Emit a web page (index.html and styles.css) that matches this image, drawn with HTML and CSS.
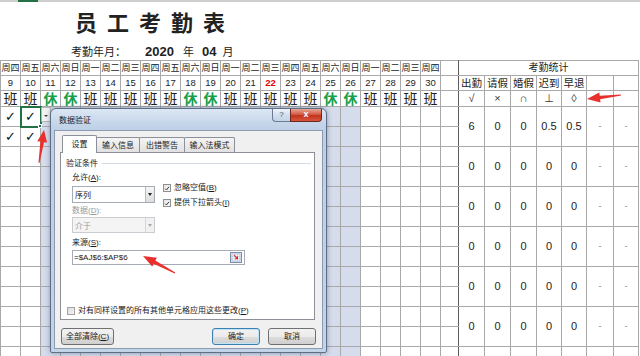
FILE: index.html
```html
<!DOCTYPE html>
<html lang="zh-CN">
<head>
<meta charset="utf-8">
<title>员工考勤表</title>
<link rel="stylesheet" href="styles.css">
</head>
<body>
<div class="colhdr"><div class="colhdr-sel"></div></div>
<h1 class="title">员工考勤表</h1>
<div class="period"><span class="pl">考勤年月：</span><b class="yr">2020</b><span class="yu">年</span><b class="mo">04</b><span class="yu2">月</span></div>
<table class="sheet">
<colgroup>
<col class="d"><col class="d">
<col class="d sel"><col class="d sel"><col class="d sel"><col class="d sel"><col class="d sel"><col class="d sel"><col class="d sel"><col class="d sel">
<col class="d sel"><col class="d sel"><col class="d sel"><col class="d sel"><col class="d sel"><col class="d sel"><col class="d sel"><col class="d sel">
<col class="d"><col class="d"><col class="d"><col class="d">
<col class="x">
<col class="s26"><col class="s26"><col class="s26"><col class="s25"><col class="s25"><col class="s27"><col class="s25">
</colgroup>
<tbody>
<tr class="hd r-wk"><td>周四</td><td>周五</td><td>周六</td><td>周日</td><td>周一</td><td>周二</td><td>周三</td><td>周四</td><td>周五</td><td>周六</td><td>周日</td><td>周一</td><td>周二</td><td>周三</td><td>周四</td><td>周五</td><td>周六</td><td>周日</td><td>周一</td><td>周二</td><td>周三</td><td>周四</td><td class="sep"></td><td class="st1 stat-h" colspan="7">考勤统计</td></tr>
<tr class="hd r-no"><td>9</td><td>10</td><td>11</td><td>12</td><td>13</td><td>14</td><td>15</td><td>16</td><td>17</td><td>18</td><td>19</td><td>20</td><td>21</td><td class="red">22</td><td>23</td><td>24</td><td>25</td><td>26</td><td>27</td><td>28</td><td>29</td><td>30</td><td class="sep"></td><td class="st1 kh">出勤</td><td class="kh">请假</td><td class="kh">婚假</td><td class="kh">迟到</td><td class="kh">早退</td><td></td><td></td></tr>
<tr class="hd r-sh"><td>班</td><td>班</td><td class="xiu">休</td><td class="xiu">休</td><td>班</td><td>班</td><td>班</td><td>班</td><td>班</td><td class="xiu">休</td><td class="xiu">休</td><td>班</td><td>班</td><td>班</td><td>班</td><td>班</td><td class="xiu">休</td><td class="xiu">休</td><td>班</td><td>班</td><td>班</td><td>班</td><td class="sep"></td><td class="st1 sym">√</td><td class="sym">×</td><td class="sym">∩</td><td class="sym">⊥</td><td class="sym">◊</td><td></td><td></td></tr>
<tr class="dr"><td class="ck">✓</td><td class="ck act">✓</td><td></td><td></td><td></td><td></td><td></td><td></td><td></td><td></td><td></td><td></td><td></td><td></td><td></td><td></td><td></td><td></td><td></td><td></td><td></td><td></td><td class="sep"></td><td class="st1 sv" rowspan="2">6</td><td class="sv" rowspan="2">0</td><td class="sv" rowspan="2">0</td><td class="sv" rowspan="2">0.5</td><td class="sv" rowspan="2">0.5</td><td class="dash" rowspan="2">-</td><td class="dash" rowspan="2">-</td></tr>
<tr class="dr"><td class="ck">✓</td><td class="ck">✓</td><td></td><td></td><td></td><td></td><td></td><td></td><td></td><td></td><td></td><td></td><td></td><td></td><td></td><td></td><td></td><td></td><td></td><td></td><td></td><td></td><td class="sep"></td></tr>
<tr class="dr"><td></td><td></td><td></td><td></td><td></td><td></td><td></td><td></td><td></td><td></td><td></td><td></td><td></td><td></td><td></td><td></td><td></td><td></td><td></td><td></td><td></td><td></td><td class="sep"></td><td class="st1 sv" rowspan="2">0</td><td class="sv" rowspan="2">0</td><td class="sv" rowspan="2">0</td><td class="sv" rowspan="2">0</td><td class="sv" rowspan="2">0</td><td class="dash" rowspan="2">-</td><td class="dash" rowspan="2">-</td></tr>
<tr class="dr"><td></td><td></td><td></td><td></td><td></td><td></td><td></td><td></td><td></td><td></td><td></td><td></td><td></td><td></td><td></td><td></td><td></td><td></td><td></td><td></td><td></td><td></td><td class="sep"></td></tr>
<tr class="dr"><td></td><td></td><td></td><td></td><td></td><td></td><td></td><td></td><td></td><td></td><td></td><td></td><td></td><td></td><td></td><td></td><td></td><td></td><td></td><td></td><td></td><td></td><td class="sep"></td><td class="st1 sv" rowspan="2">0</td><td class="sv" rowspan="2">0</td><td class="sv" rowspan="2">0</td><td class="sv" rowspan="2">0</td><td class="sv" rowspan="2">0</td><td class="dash" rowspan="2">-</td><td class="dash" rowspan="2">-</td></tr>
<tr class="dr"><td></td><td></td><td></td><td></td><td></td><td></td><td></td><td></td><td></td><td></td><td></td><td></td><td></td><td></td><td></td><td></td><td></td><td></td><td></td><td></td><td></td><td></td><td class="sep"></td></tr>
<tr class="dr"><td></td><td></td><td></td><td></td><td></td><td></td><td></td><td></td><td></td><td></td><td></td><td></td><td></td><td></td><td></td><td></td><td></td><td></td><td></td><td></td><td></td><td></td><td class="sep"></td><td class="st1 sv" rowspan="2">0</td><td class="sv" rowspan="2">0</td><td class="sv" rowspan="2">0</td><td class="sv" rowspan="2">0</td><td class="sv" rowspan="2">0</td><td class="dash" rowspan="2">-</td><td class="dash" rowspan="2">-</td></tr>
<tr class="dr"><td></td><td></td><td></td><td></td><td></td><td></td><td></td><td></td><td></td><td></td><td></td><td></td><td></td><td></td><td></td><td></td><td></td><td></td><td></td><td></td><td></td><td></td><td class="sep"></td></tr>
<tr class="dr"><td></td><td></td><td></td><td></td><td></td><td></td><td></td><td></td><td></td><td></td><td></td><td></td><td></td><td></td><td></td><td></td><td></td><td></td><td></td><td></td><td></td><td></td><td class="sep"></td><td class="st1 sv" rowspan="2">0</td><td class="sv" rowspan="2">0</td><td class="sv" rowspan="2">0</td><td class="sv" rowspan="2">0</td><td class="sv" rowspan="2">0</td><td class="dash" rowspan="2">-</td><td class="dash" rowspan="2">-</td></tr>
<tr class="dr"><td></td><td></td><td></td><td></td><td></td><td></td><td></td><td></td><td></td><td></td><td></td><td></td><td></td><td></td><td></td><td></td><td></td><td></td><td></td><td></td><td></td><td></td><td class="sep"></td></tr>
<tr class="dr"><td></td><td></td><td></td><td></td><td></td><td></td><td></td><td></td><td></td><td></td><td></td><td></td><td></td><td></td><td></td><td></td><td></td><td></td><td></td><td></td><td></td><td></td><td class="sep"></td><td class="st1 sv" rowspan="2">0</td><td class="sv" rowspan="2">0</td><td class="sv" rowspan="2">0</td><td class="sv" rowspan="2">0</td><td class="sv" rowspan="2">0</td><td class="dash" rowspan="2">-</td><td class="dash" rowspan="2">-</td></tr>
<tr class="dr"><td></td><td></td><td></td><td></td><td></td><td></td><td></td><td></td><td></td><td></td><td></td><td></td><td></td><td></td><td></td><td></td><td></td><td></td><td></td><td></td><td></td><td></td><td class="sep"></td></tr>
<tr class="dr dr-last"><td></td><td></td><td></td><td></td><td></td><td></td><td></td><td></td><td></td><td></td><td></td><td></td><td></td><td></td><td></td><td></td><td></td><td></td><td></td><td></td><td></td><td></td><td class="sep"></td><td class="st1"></td><td></td><td></td><td></td><td></td><td></td><td></td></tr>
</tbody>
</table>

<div class="dd-btn"><i class="dd-tri"></i></div>
<div class="fill-handle"></div>

<div class="dlg">
  <div class="dlg-bar">
    <span class="dlg-title">数据验证</span>
    <span class="dlg-help">?</span>
    <span class="dlg-close">x</span>
  </div>
  <div class="dlg-client">
    <div class="tabs">
      <span class="tab on w1">设置</span>
      <span class="tab w2">输入信息</span>
      <span class="tab w3">出错警告</span>
      <span class="tab w4">输入法模式</span>
    </div>
    <div class="panel">
      <div class="grp"><span>验证条件</span><i class="grp-line"></i></div>
      <div class="form">
        <div class="form-row">
          <div class="fcol">
            <div class="lbl">允许(<u>A</u>):</div>
            <div class="combo"><span>序列</span><i class="combo-btn"><i class="tri"></i></i></div>
            <div class="lbl dis lbl-data">数据(<u>D</u>):</div>
            <div class="combo dis"><span>介于</span><i class="combo-btn"><i class="tri"></i></i></div>
          </div>
          <div class="fopts">
            <div class="cb cb1"><i class="box"><svg viewBox="0 0 8 8" width="8" height="8"><path d="M1.5 4.2 L3.3 6 L6.6 1.8" fill="none" stroke="#333" stroke-width="1.3"/></svg></i><span>忽略空值(<u>B</u>)</span></div>
            <div class="cb cb2"><i class="box"><svg viewBox="0 0 8 8" width="8" height="8"><path d="M1.5 4.2 L3.3 6 L6.6 1.8" fill="none" stroke="#333" stroke-width="1.3"/></svg></i><span>提供下拉箭头(<u>I</u>)</span></div>
          </div>
        </div>
        <div class="lbl lbl-src">来源(<u>S</u>):</div>
        <div class="refedit"><span>=$AJ$6:$AP$6</span>
          <i class="ref-btn"><svg viewBox="0 0 12 11" width="12" height="11"><rect x="0.5" y="0.5" width="11" height="10" fill="#e9eef6" stroke="#7d8da3"/><rect x="2" y="2" width="8" height="7" fill="#fff" stroke="#8aa0c0" stroke-width="0.6"/><path d="M2 4.5h8M2 6.8h8M5 2v7M7.5 2v7" stroke="#9fb2cc" stroke-width="0.5"/><path d="M4 3.2l3.5 3.5M7.5 4.4v2.3h-2.3" fill="none" stroke="#d22" stroke-width="1.1"/></svg></i>
        </div>
      </div>
      <div class="cb cb-apply"><i class="box off"></i><span>对有同样设置的所有其他单元格应用这些更改(<u>P</u>)</span></div>
    </div>
    <div class="btns">
      <span class="btn btn-clr">全部清除(<u>C</u>)</span>
      <span class="btn btn-ok">确定</span>
      <span class="btn btn-cancel">取消</span>
    </div>
  </div>
</div>

<svg class="arrows" viewBox="0 0 640 356" width="640" height="356">
  <polygon points="38.5,162.9 40.4,141.6 37.3,141.2 44,130 47.1,142.6 44.0,142.2 39.5,163.1"/>
  <polygon points="174.7,273.5 153.7,263.7 152.2,266.5 143,256 156.9,257.7 155.3,260.5 175.3,272.5"/>
  <polygon points="620.9,94.4 599.7,95.7 599.3,92.5 587,99 600.5,102.5 600.1,99.3 621.1,95.6"/>
</svg>
</body>
</html>
```

FILE: styles.css
```css
* { box-sizing: border-box; }
html, body { margin: 0; padding: 0; }
body {
  width: 640px;
  height: 356px;
  overflow: hidden;
  position: relative;
  background: #fff;
  color: #1c1c1c;
  font-family: "Liberation Sans", "Noto Sans CJK SC", sans-serif;
}

/* top strip of the sheet */
.colhdr { height: 2px; background: #cfcfcf; }
.colhdr-sel { width: 20px; height: 2px; margin-left: 18px; background: #217346; }

.title {
  margin: 6px 0 0 75px;
  font-family: "Noto Sans CJK SC", sans-serif;
  font-weight: 700;
  font-size: 22px;
  line-height: 26px;
  letter-spacing: 10px;
  color: #222;
}

.period {
  margin: 10px 0 0 71px;
  height: 16px;
  line-height: 16px;
  font-size: 11px;
  font-family: "Liberation Sans", "Noto Sans CJK SC", sans-serif;
  white-space: nowrap;
  color: #222;
}
.period b { font-size: 13px; font-weight: 700; }
.yr { margin-left: 19px; }
.yu { margin-left: 9px; }
.mo { margin-left: 8px; }
.yu2 { margin-left: 6px; }

/* the worksheet */
.sheet {
  border-collapse: collapse;
  table-layout: fixed;
  width: 638px;
  font-size: 9px;
}
.sheet td {
  border: 1px solid #a9a9a9;
  padding: 0;
  text-align: center;
  vertical-align: middle;
  white-space: nowrap;
  overflow: hidden;
  line-height: 1;
}
col.d { width: 20px; }
col.x { width: 18px; }
col.s26 { width: 26px; }
col.s25 { width: 25px; }
col.s27 { width: 27px; }
col.sel { background: #d5dcec; }

.sheet .hd td { background: #fff; }
.r-wk td { height: 15px; font-size: 9px; }
.r-no td { height: 15px; font-size: 9.5px; }
.r-sh td { height: 16px; font-size: 14px; }
.dr td { height: 20px; }
.dr-last td { height: 10px; }

.sheet td.sep { border-right: 1px solid #5c5c5c; }
.sheet td.st1 { border-left: 1px solid #5c5c5c; }
.sheet td.stat-h { font-size: 10px; }
.sheet td.kh { font-size: 10.5px; }
.sheet td.sym { font-family: "Liberation Sans", "DejaVu Sans", sans-serif; font-size: 11px; color: #3a3a3a; }
.sheet td.xiu { color: #14a04c; font-weight: 700; }
.sheet td.red { color: #e60000; font-weight: 700; }
.sheet td.ck { font-family: "DejaVu Sans", sans-serif; font-size: 13px; font-weight: 700; color: #111; }
.sheet td.act { outline: 2px solid #217346; outline-offset: -1px; }
.sheet td.sv { font-size: 11px; color: #222; }
.sheet td.dash { color: #8a8a8a; font-size: 9px; }

/* in-cell dropdown and fill handle */
.dd-btn {
  position: absolute;
  left: 41px;
  top: 107px;
  width: 10px;
  height: 15px;
  background: #f3f3f3;
  border: 1px solid #b5b5b5;
  display: flex;
  align-items: flex-end;
  justify-content: center;
  padding-bottom: 4px;
}
.dd-tri { width: 0; height: 0; border-left: 2px solid transparent; border-right: 2px solid transparent; border-top: 2px solid #444; }
.fill-handle {
  position: absolute;
  left: 38px;
  top: 124px;
  width: 4px;
  height: 4px;
  background: #217346;
  border: 1px solid #fff;
}

/* dialog */
.dlg {
  position: absolute;
  left: 50px;
  top: 108px;
  width: 277px;
  height: 245px;
  border: 1px solid #5d6e86;
  border-radius: 6px 6px 2px 2px;
  background: linear-gradient(180deg, #dce7f4 0, #c6d6ea 14px, #bdcfe6 22px, #c3d3e8 100%);
  box-shadow: 0 0 5px rgba(40, 60, 90, .45);
  padding: 0 3px 3px;
  font-family: "Liberation Sans", "Noto Sans CJK SC", sans-serif;
  font-size: 8px;
  color: #1a1a1a;
}
.dlg-bar { height: 21px; display: flex; align-items: flex-start; }
.dlg-title { padding: 7px 0 0 5px; line-height: 10px; font-size: 8px; color: #1a1a1a; }
.dlg-help {
  margin-left: auto;
  width: 18px;
  height: 13px;
  border: 1px solid #6b7b92;
  border-top: none;
  border-right: none;
  border-radius: 0 0 0 4px;
  background: linear-gradient(180deg, #eef3fa, #d3dfee 50%, #c4d3e8);
  text-align: center;
  font-size: 8px;
  line-height: 12px;
  color: #44556c;
}
.dlg-close {
  width: 32px;
  height: 13px;
  margin-right: 1px;
  border: 1px solid #6a2a22;
  border-top: none;
  border-radius: 0 0 4px 0;
  background: linear-gradient(180deg, #e9a696, #d35c46 45%, #c2341e 55%, #d7563c);
  text-align: center;
  font-size: 9px;
  font-weight: 700;
  line-height: 11px;
  color: #fff;
}
.dlg-client {
  height: 219px;
  background: #f0f0f0;
  border: 1px solid #8c9bb0;
  padding: 4px 7px 0 5px;
}

.tabs { display: flex; align-items: flex-end; height: 17px; padding-left: 2px; position: relative; z-index: 1; }
.tab {
  height: 15px;
  margin-left: -1px;
  border: 1px solid #8d9098;
  border-bottom: none;
  border-radius: 2px 2px 0 0;
  background: linear-gradient(180deg, #f4f4f4, #e1e1e1);
  text-align: center;
  line-height: 13px;
  font-family: "Noto Sans CJK SC", sans-serif;
  font-size: 8px;
}
.tab.on { height: 18px; margin-bottom: -1px; background: #fff; line-height: 16px; }
.w1 { width: 35px; margin-left: 0; }
.w2 { width: 44px; }
.w3 { width: 46px; }
.w4 { width: 51px; }

.panel {
  height: 168px;
  background: #fff;
  border: 1px solid #8d9098;
  padding: 5px 0 0 5px;
}
.grp { display: flex; align-items: center; height: 10px; line-height: 10px; }
.grp span { font-family: "Noto Sans CJK SC", sans-serif; }
.grp-line { flex: 1; height: 1px; background: #d5dbe3; margin: 0 3px 0 4px; }

.form { margin-left: 6px; }
.form-row { display: flex; }
.fcol { width: 83px; }
.lbl { line-height: 10px; height: 10px; margin-top: 5px; }
.lbl.dis { color: #9a9a9a; }
.lbl-data { margin-top: 3px; }
.combo {
  margin-top: 3px;
  height: 17px;
  border: 1px solid #a5acb5;
  background: #fff;
  display: flex;
  align-items: center;
  padding-left: 2px;
}
.combo span { flex: 1; }
.combo.dis { margin-top: 1px; height: 16px; background: #f4f4f4; border-color: #c9cdd2; color: #9a9a9a; }
.combo-btn {
  width: 9px;
  align-self: stretch;
  border-left: 1px solid #b6bcc4;
  background: linear-gradient(180deg, #f6f6f6, #dcdcdc);
  display: flex;
  align-items: center;
  justify-content: center;
}
.tri { width: 0; height: 0; border-left: 2px solid transparent; border-right: 2px solid transparent; border-top: 3px solid #222; }
.combo.dis .tri { border-top-color: #aaa; }
.combo.dis .combo-btn { background: #f1f1f1; border-left-color: #d6d6d6; }

.fopts { margin-left: 8px; }
.cb { display: flex; align-items: center; height: 10px; line-height: 10px; white-space: nowrap; }
.cb1 { margin-top: 15px; }
.cb2 { margin-top: 5px; }
.box {
  width: 8px;
  height: 8px;
  margin-right: 3px;
  border: 1px solid #8e8f8f;
  background: linear-gradient(135deg, #e4e4e4, #fafafa);
  display: flex;
  align-items: center;
  justify-content: center;
}
.box svg { width: 7px; height: 7px; }
.box.off { background: linear-gradient(135deg, #dcdcdc, #f4f4f4); border-color: #a3a3a3; }

.lbl-src { margin-top: 5px; }
.refedit {
  margin-top: 2px;
  width: 173px;
  height: 15px;
  border: 1px solid #a5acb5;
  background: #fff;
  display: flex;
  align-items: center;
  padding-left: 1px;
  font-size: 8px;
}
.refedit span { flex: 1; }
.ref-btn { width: 14px; height: 13px; display: flex; align-items: center; justify-content: center; margin-right: 1px; }

.cb-apply { margin-top: 41px; margin-left: 1px; }

.btns { display: flex; margin-top: 8px; height: 17px; }
.btn {
  height: 17px;
  border: 1px solid #707070;
  border-radius: 3px;
  background: linear-gradient(180deg, #f2f2f2 0, #ebebeb 50%, #dddddd 51%, #cfcfcf 100%);
  text-align: center;
  line-height: 15px;
  font-size: 8px;
}
.btn-clr { width: 53px; margin-left: 1px; }
.btn-ok {
  width: 48px;
  margin-left: auto;
  border-color: #3c7fb1;
  box-shadow: inset 0 0 0 1px #bde4f8;
}
.btn-cancel { width: 48px; margin-left: 8px; margin-right: -1px; }

/* annotation arrows */
.arrows { position: absolute; left: 0; top: 0; pointer-events: none; }
.arrows polygon { fill: #e8302c; }
```
